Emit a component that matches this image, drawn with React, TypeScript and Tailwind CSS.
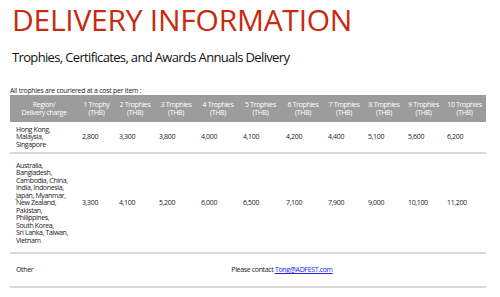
const cols =
  "grid grid-cols-[68px_37px_40px_42px_42px_43px_42px_40px_40px_39px_43px]";

const headers = [
  "1 Trophy",
  "2 Trophies",
  "3 Trophies",
  "4 Trophies",
  "5 Trophies",
  "6 Trophies",
  "7 Trophies",
  "8 Trophies",
  "9 Trophies",
  "10 Trophies",
];

const rows = [
  {
    height: "h-[32px]",
    region: ["Hong Kong,", "Malaysia,", "Singapore"],
    prices: ["2,800", "3,300", "3,800", "4,000", "4,100", "4,200", "4,400", "5,100", "5,600", "6,200"],
  },
  {
    height: "h-[100px]",
    region: [
      "Australia,",
      "Bangladesh,",
      "Cambodia, China,",
      "India, Indonesia,",
      "Japan, Myanmar,",
      "New Zealand,",
      "Pakistan,",
      "Philippines,",
      "South Korea,",
      "Sri Lanka, Taiwan,",
      "Vietnam",
    ],
    prices: ["3,300", "4,100", "5,200", "6,000", "6,500", "7,100", "7,900", "9,000", "10,100", "11,200"],
  },
];

export default function App() {
  return (
    <div className="h-[297px] w-[500px] overflow-hidden bg-white font-['Open_Sans',sans-serif] text-[#222]">
      <h1 className="ml-[12px] mt-[5px] text-[30px] font-medium leading-[30px] tracking-[-0.25px] text-[#c8290f]">
        DELIVERY INFORMATION
      </h1>
      <h2 className="ml-[12px] mt-[16px] text-[13px] font-medium leading-[13px] tracking-[-0.65px] text-[#111]">
        Trophies, Certificates, and Awards Annuals Delivery
      </h2>

      <p className="ml-[10px] mt-[23px] text-[6.8px] leading-[8px] tracking-[-0.2px]">
        All trophies are couriered at a cost per item :
      </p>

      <div className="ml-[10px] w-[476px] text-[7px] font-medium tracking-[-0.35px]">
        <div className={`${cols} h-[27px] items-center bg-[#9c9c9c] leading-[7.5px] text-white`}>
          <div className="text-center">
            Region/
            <br />
            Delivery charge
          </div>
          {headers.map((h) => (
            <div key={h} className="text-center">
              {h}
              <br />
              (THB)
            </div>
          ))}
        </div>

        {rows.map((r, i) => (
          <div
            key={i}
            className={`${cols} ${r.height} items-center border-b-2 border-[#dadada] leading-[7.5px]`}
          >
            <div className="pl-[6px]">
              {r.region.map((l) => (
                <div key={l}>{l}</div>
              ))}
            </div>
            {r.prices.map((p, j) => (
              <div key={j} className="pl-[4px]">
                {p}
              </div>
            ))}
          </div>
        ))}

        <div className={`${cols} h-[34px] items-center border-b-2 border-[#dadada] leading-[7.5px]`}>
          <div className="pl-[6px]">Other</div>
          <div className="col-span-10 text-center">
            Please contact{" "}
            <a href="#" className="text-[#2222ee] underline">
              Tong@ADFEST.com
            </a>
          </div>
        </div>
      </div>
    </div>
  );
}
